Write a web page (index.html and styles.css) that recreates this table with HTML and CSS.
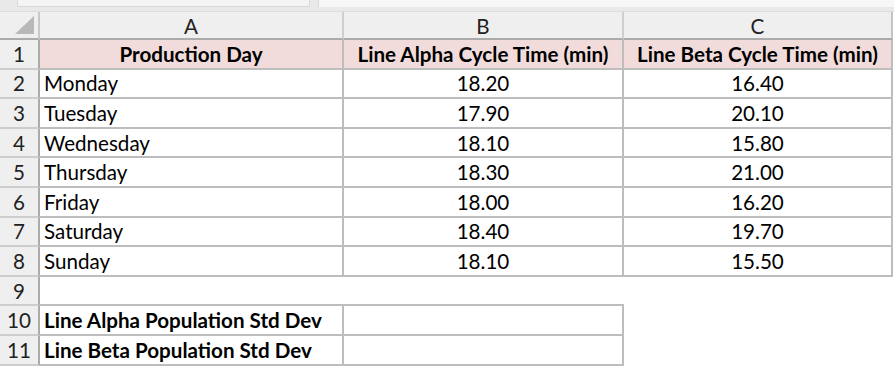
FILE: index.html
```html
<!DOCTYPE html>
<html>
<head>
<meta charset="utf-8">
<link rel="stylesheet" href="styles.css">
</head>
<body>
<div class="topbar"><div class="namebox"></div><div class="fxbox"></div></div>
<div class="sheet">
  <div class="corner"><svg width="20" height="19" viewBox="0 0 20 19"><polygon points="19,0 19,18 0,18" fill="#b8b8b8"/></svg></div>
  <div class="colh">A</div>
  <div class="colh">B</div>
  <div class="colh last">C</div>

  <div class="rowh">1</div>
  <div class="c hd">Production Day</div>
  <div class="c hd">Line Alpha Cycle Time (min)</div>
  <div class="c hd">Line Beta Cycle Time (min)</div>

  <div class="rowh">2</div><div class="c txt">Monday</div><div class="c num">18.20</div><div class="c num">16.40</div>
  <div class="rowh">3</div><div class="c txt">Tuesday</div><div class="c num">17.90</div><div class="c num">20.10</div>
  <div class="rowh">4</div><div class="c txt">Wednesday</div><div class="c num">18.10</div><div class="c num">15.80</div>
  <div class="rowh">5</div><div class="c txt">Thursday</div><div class="c num">18.30</div><div class="c num">21.00</div>
  <div class="rowh">6</div><div class="c txt">Friday</div><div class="c num">18.00</div><div class="c num">16.20</div>
  <div class="rowh">7</div><div class="c txt">Saturday</div><div class="c num">18.40</div><div class="c num">19.70</div>
  <div class="rowh">8</div><div class="c txt">Sunday</div><div class="c num">18.10</div><div class="c num">15.50</div>

  <div class="rowh">9</div><div class="e bb"></div><div class="e bb"></div><div class="e"></div>

  <div class="rowh">10</div><div class="c txt b">Line Alpha Population Std Dev</div><div class="c"></div><div class="e"></div>
  <div class="rowh">11</div><div class="c txt b">Line Beta Population Std Dev</div><div class="c"></div><div class="e"></div>
</div>
</body>
</html>
```

FILE: styles.css
```css
* { box-sizing: border-box; }
html, body { margin: 0; padding: 0; background: #ffffff; }
body {
  width: 894px;
  height: 366px;
  overflow: hidden;
  font-family: "Lato", "Open Sans", sans-serif;
  font-size: 20.6px;
  color: #000;
}
.topbar {
  height: 12px;
  background: #e9e9e9;
  display: flex;
  gap: 8px;
  padding: 0 0 4px 17px;
  border-bottom: 1px solid #dcdcdc;
}
.namebox { width: 293px; background: #f4f4f4; border: 1px solid #dadada; border-top: 0; }
.fxbox { flex: 1; background: #f7f7f7; border-left: 1px solid #dadada; }
.sheet {
  display: grid;
  grid-template-columns: 40px 304px 280px 269px;
  grid-template-rows: 28px repeat(11, 29.6px);
}
.corner {
  background: #efefef;
  border-right: 2px solid #c8c8c8;
  border-bottom: 2px solid #ababab;
  display: flex;
  align-items: flex-end;
  justify-content: flex-end;
  padding: 0 3px 3px 0;
}
.corner svg { display: block; }
.colh {
  background: #efefef;
  border-right: 2px solid #cfcfcf;
  border-bottom: 2px solid #ababab;
  display: flex;
  align-items: center;
  justify-content: center;
  color: #222;
  padding-top: 1px;
}
.colh.last { border-right-color: #c4c4c4; }
.rowh {
  background: #efefef;
  border-right: 2px solid #ababab;
  border-bottom: 2px solid #cdcdcd;
  display: flex;
  align-items: center;
  justify-content: center;
  color: #222;
}
.c {
  border-right: 2px solid #bdbdbd;
  border-bottom: 2px solid #bdbdbd;
  display: flex;
  align-items: center;
  white-space: nowrap;
  overflow: hidden;
}
.hd {
  background: #f2dcdb;
  font-weight: bold;
  justify-content: center;
}
.txt { padding-left: 4px; }
.b { font-weight: bold; }
.num { justify-content: center; }
.e { }
.e.bb { border-bottom: 2px solid #bdbdbd; }
```
